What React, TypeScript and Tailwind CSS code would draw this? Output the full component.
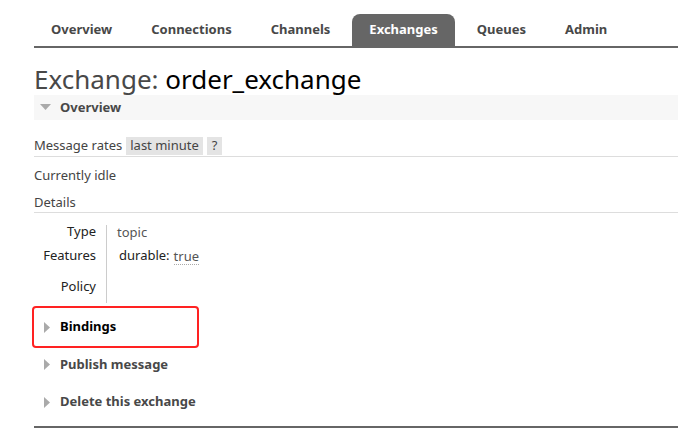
import React from "react";

const tabs = ["Overview", "Connections", "Channels", "Exchanges", "Queues", "Admin"];

function TriRight() {
  return (
    <svg width="7" height="11" viewBox="0 0 7 11" className="shrink-0">
      <polygon points="0,0 6,5.5 0,11" fill="#aaa" />
    </svg>
  );
}

function TriDown() {
  return (
    <svg width="11" height="7" viewBox="0 0 11 7" className="shrink-0">
      <polygon points="0,0 11,0 5.5,6" fill="#aaa" />
    </svg>
  );
}

export default function App() {
  return (
    <div
      className="w-[678px] h-[428px] bg-white overflow-hidden pl-[34px] text-[13px] text-[#444]"
      style={{ fontFamily: '"Noto Sans", "DejaVu Sans", sans-serif' }}
    >
      {/* nav */}
      <div className="flex items-end gap-[5px] border-b-2 border-[#666] h-[48px]">
        {tabs.map((t) => (
          <div
            key={t}
            className={
              "h-[32px] px-[17px] flex items-center font-bold text-[13px] rounded-t-[8px] " +
              (t === "Exchanges" ? "bg-[#666] text-white" : "text-[#484848]")
            }
          >
            {t}
          </div>
        ))}
      </div>

      {/* title */}
      <h1 className="mt-[15px] text-[26px] leading-[32px] text-[#484848]">
        Exchange: <span className="text-black">order_exchange</span>
      </h1>

      {/* overview header */}
      <div className="h-[25px] bg-[#f7f7f7] flex items-center gap-[9px] pl-[6px] font-bold text-[13px] text-[#484848]">
        <TriDown />
        <span>Overview</span>
      </div>

      {/* message rates */}
      <div className="mt-[17px] h-[18px] flex items-center border-b border-[#ddd] box-content pb-[1px]">
        <span className="mr-[4px]">Message rates</span>
        <span className="bg-[#e4e4e4] px-[4px] h-[18px] flex items-center">last minute</span>
        <span className="bg-[#e4e4e4] ml-[4px] px-[5px] h-[18px] flex items-center">?</span>
      </div>

      <div className="mt-[9px] leading-[18px]">Currently idle</div>
      <div className="mt-[9px] leading-[18px] pb-[1px] border-b border-[#ddd]">Details</div>

      {/* details table */}
      <div className="flex mt-[9px]">
        <div className="w-[72px] flex flex-col items-end text-[#222] pr-[10px]">
          <div className="h-[24px] leading-[18px]">Type</div>
          <div className="h-[31px] leading-[18px]">Features</div>
          <div className="h-[23px] leading-[18px]">Policy</div>
        </div>
        <div className="border-l border-[#ccc] pl-[10px] h-[78px] mt-[3px]">
          <div className="h-[23px] leading-[18px] text-[#555] -mt-[2px]">topic</div>
          <div className="flex items-start leading-[18px]">
            <span className="ml-[2px] text-[#222]">durable:</span>
            <span className="ml-[4px] mt-[2px] text-[#555] border-b border-dotted border-[#aaa] leading-[16px]">true</span>
          </div>
        </div>
      </div>

      {/* sections */}
      <div className="mt-[3px] -ml-[2px] w-[167px] h-[42px] border-2 border-[#f22] rounded-[4px] flex items-center gap-[9px] pl-[10px] font-bold text-black">
        <TriRight />
        <span>Bindings</span>
      </div>
      <div className="h-[33px] flex items-center gap-[9px] pl-[10px] font-bold text-[#484848]">
        <TriRight />
        <span>Publish message</span>
      </div>
      <div className="h-[39px] pt-[3px] flex items-center gap-[9px] pl-[10px] font-bold text-[#484848]">
        <TriRight />
        <span>Delete this exchange</span>
      </div>
      <div className="mt-[6px] border-b-2 border-[#666]" />
    </div>
  );
}
